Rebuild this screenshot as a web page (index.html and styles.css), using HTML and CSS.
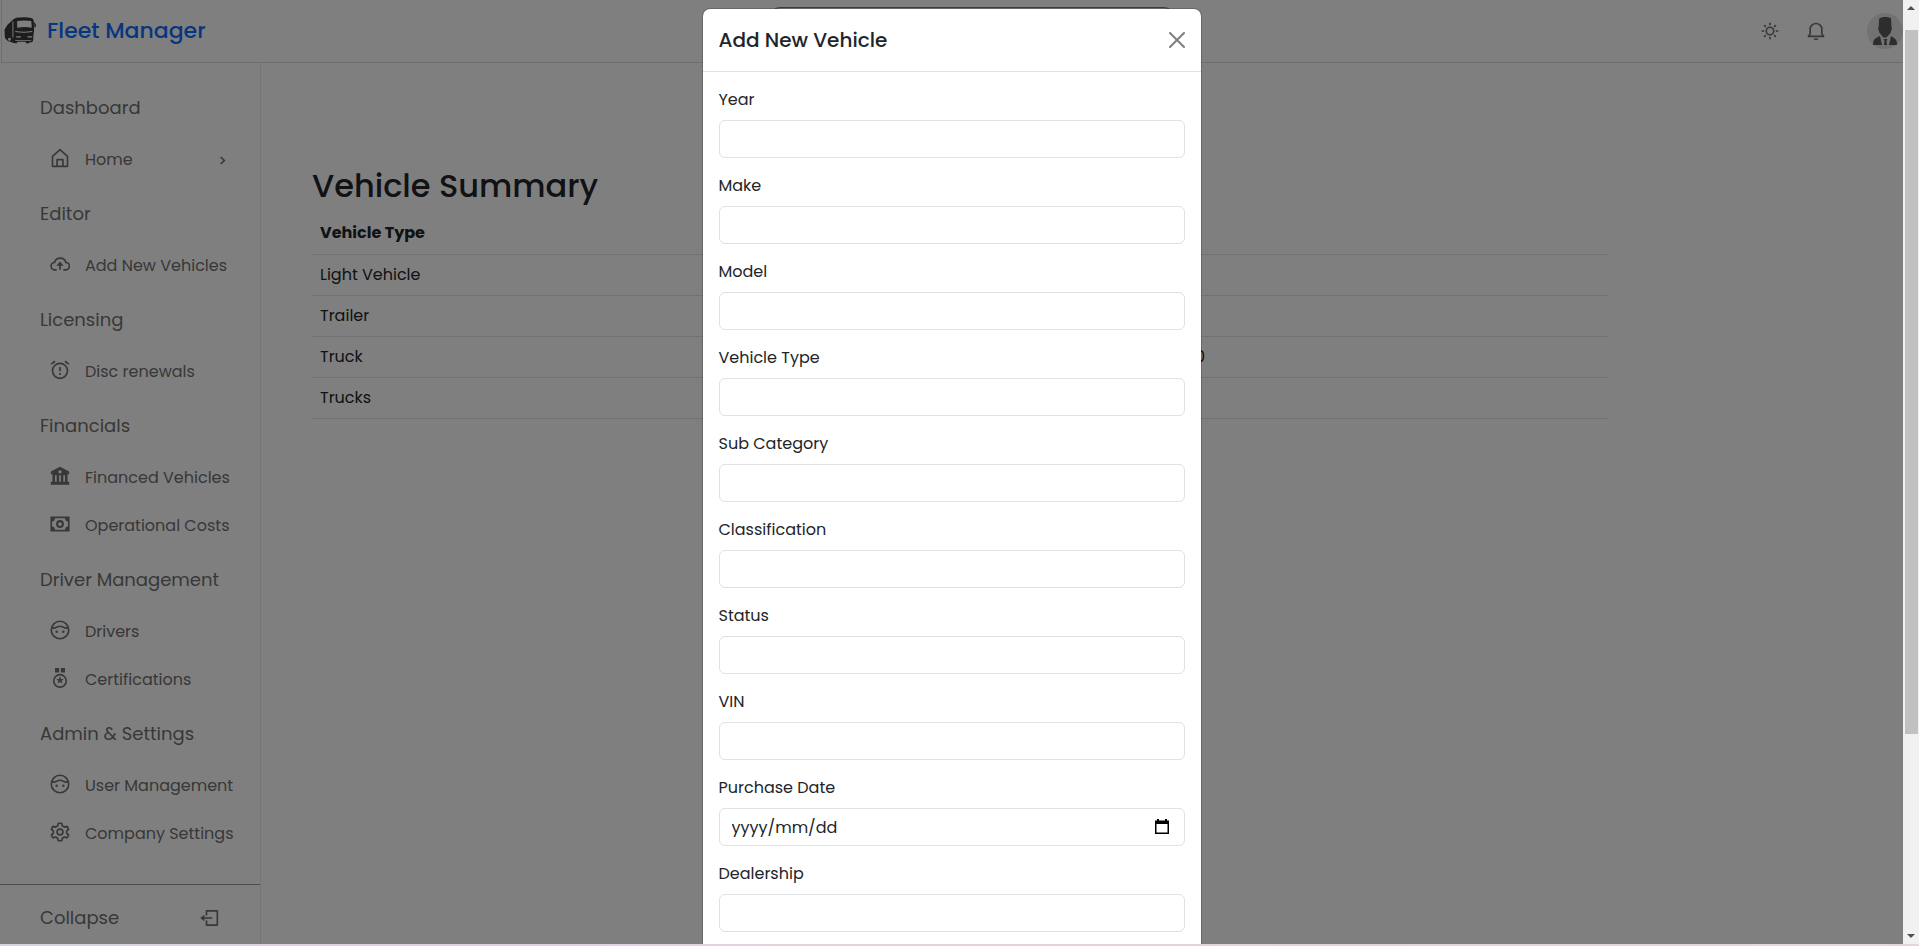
FILE: index.html
```html
<!DOCTYPE html>
<html lang="en">
<head>
<meta charset="utf-8">
<title>Fleet Manager</title>
<link rel="stylesheet" href="styles.css">
</head>
<body>
<div class="viewport">
  <div class="app">
    <header class="topbar">
      <a class="brand" href="#">
        <svg class="logo" viewBox="0 0 34 30" aria-hidden="true">
          <path fill="#3a3a3a" d="M10 2.500 13 1c6-1 12-1 17 .500l1.500 2 .5 11-.5 3-.5 7-1 2.500h-3V28h-4v-1.500h-9V28h-3l-3-1-4-1.500-3-3-.5-9L4 8z"/>
          <path fill="#fff" d="M14 4.500c5-1 10-1 15 0l.5 7c-5-1-10-1-15.500 0zM12 15c6 1 12 1 18 0v1c-6 1-12 1-18 0zM13 20.500h5V22h-5zM25 20.500h5V22h-5zM12 24.500h17v.800H12zM9 5h1v17H9zM5 22.500a1.500 1.500 0 1 1 0 2.500 1.500 1.500 0 0 1 0-2.500z"/>
          <path stroke="#3a3a3a" stroke-width="1.500" fill="none" d="m31 6 2 2v3"/>
        </svg>
        <span>Fleet Manager</span>
      </a>
      <input class="search" type="search" aria-label="Search">
      <div class="actions">
        <button type="button" class="icon-button" aria-label="Theme">
          <svg viewBox="0 0 24 24" class="icon"><circle cx="12" cy="12" r="4.500" fill="none" stroke="currentColor" stroke-width="2"/><path fill="none" stroke="currentColor" stroke-width="2" d="M12 2v3M12 19v3M2 12h3M19 12h3M5 5l2 2M17 17l2 2M5 19l2-2M17 7l2-2"/></svg>
        </button>
        <button type="button" class="icon-button" aria-label="Notifications">
          <svg viewBox="0 0 24 24" class="icon"><path fill="none" stroke="currentColor" stroke-width="2" stroke-linejoin="round" d="M5 15.500V10a7 7 0 0 1 14 0v5.500l2 2.500v.500H3V18z"/><path fill="currentColor" d="M9 21h6a3 2 0 0 1-6 0z"/></svg>
        </button>
        <button type="button" class="avatar" aria-label="Account">
          <svg viewBox="0 0 36 36"><circle cx="18" cy="18" r="18" fill="#e4e4e4"/><path fill="#5a5a5a" d="M12 6c3-3 9-2 12-1l.5 9 .5 1-1.500 5-4 4.500h-3L12.500 20 11 15l.8-1zM6 32c0-4 1-6 3-7l4-2 2 9zM30 32c0-4-1-6-3-7l-3-2-2 9zM16.500 26h4l-1 2 .5 4h-3l.5-4z"/></svg>
        </button>
      </div>
    </header>
    <div class="columns">
      <nav class="sidebar" aria-label="Main">
        <div class="groups">
          <section class="group"><h2>Dashboard</h2>
            <a href="#" class="item"><svg viewBox="0 0 24 24" class="icon"><path fill="none" stroke="currentColor" stroke-width="2" stroke-linejoin="round" d="M3 10 12 2l9 8v12H3zM8.500 22v-8h7v8"/></svg><span>Home</span>
              <svg class="chevron" viewBox="0 0 8 10"><path fill="none" stroke="currentColor" stroke-width="2" d="m2 1 4 4-4 4"/></svg></a>
          </section>
          <section class="group"><h2>Editor</h2>
            <a href="#" class="item"><svg viewBox="0 0 24 24" class="icon"><path fill="none" stroke="currentColor" stroke-width="2" d="M8 19H6a4.500 4.500 0 0 1-.5-9 7 7 0 0 1 13.500 0 4.500 4.500 0 0 1-.500 9H16"/><path fill="currentColor" d="m12 9 4.500 5H13v5h-2v-5H7.500z"/></svg><span>Add New Vehicles</span></a>
          </section>
          <section class="group"><h2>Licensing</h2>
            <a href="#" class="item"><svg viewBox="0 0 24 24" class="icon"><path fill="none" stroke="currentColor" stroke-width="2" d="M12 4a9 9 0 1 0 0 18 9 9 0 0 0 0-18zM1.500 5 6 1.500M22.500 5 18 1.500M12 8.500v5M12 15.500v2.500"/></svg><span>Disc renewals</span></a>
          </section>
          <section class="group"><h2>Financials</h2>
            <a href="#" class="item"><svg viewBox="0 0 24 24" class="icon"><path fill="currentColor" fill-rule="evenodd" d="M12 1 1 6.500V10h2v9H1v3.500h22V19h-2v-9h2V6.500zM12 5a2 2 0 1 1 0 4 2 2 0 0 1 0-4zM6 11h2v8H6zM11 11h2v8h-2zM16 11h2v8h-2z"/></svg><span>Financed Vehicles</span></a>
            <a href="#" class="item"><svg viewBox="0 0 24 24" class="icon"><path fill="currentColor" fill-rule="evenodd" d="M.5 3h23v18H.5zM6 5a4 4 0 0 1-3.500 4v6A4 4 0 0 1 6 19h12a4 4 0 0 1 3.500-4V9A4 4 0 0 1 18 5z"/><circle cx="12" cy="12" r="3.500" fill="none" stroke="currentColor" stroke-width="2.500"/></svg><span>Operational Costs</span></a>
          </section>
          <section class="group"><h2>Driver Management</h2>
            <a href="#" class="item"><svg viewBox="0 0 24 24" class="icon"><circle cx="12" cy="12" r="10.500" fill="none" stroke="currentColor" stroke-width="2"/><path fill="none" stroke="currentColor" stroke-width="2" d="M2.500 9.500c4 1 6-2 9.500-2s5.500 3 9.500 2"/><circle cx="8" cy="14" r="1.500" fill="currentColor"/><circle cx="16" cy="14" r="1.500" fill="currentColor"/></svg><span>Drivers</span></a>
            <a href="#" class="item"><svg viewBox="0 0 24 24" class="icon"><path fill="currentColor" d="M6 0h5v5.500H6zM13 0h5v5.500h-5zM12 10l1.300 3.200 3.200.2-2.500 2 .9 3.200-2.900-1.800-2.900 1.800.9-3.200-2.500-2 3.200-.2z"/><circle cx="12" cy="15.500" r="7.500" fill="none" stroke="currentColor" stroke-width="2"/></svg><span>Certifications</span></a>
          </section>
          <section class="group"><h2>Admin &amp; Settings</h2>
            <a href="#" class="item"><svg viewBox="0 0 24 24" class="icon"><circle cx="12" cy="12" r="10.500" fill="none" stroke="currentColor" stroke-width="2"/><path fill="none" stroke="currentColor" stroke-width="2" d="M2.500 9.500c4 1 6-2 9.500-2s5.500 3 9.500 2"/><circle cx="8" cy="14" r="1.500" fill="currentColor"/><circle cx="16" cy="14" r="1.500" fill="currentColor"/></svg><span>User Management</span></a>
            <a href="#" class="item"><svg viewBox="0 0 24 24" class="icon"><path fill="none" stroke="currentColor" stroke-width="2" stroke-linejoin="round" d="m10 1.500-.8 3.200-2.400 1.400-3.200-1-2 3.500L4 11v2.500l-2.400 2 2 3.500 3.200-1 2.400 1.400.8 3.100h4l.8-3.100 2.400-1.400 3.200 1 2-3.500-2.400-2V11l2.400-2.400-2-3.500-3.200 1-2.400-1.400-.8-3.200z"/><circle cx="12" cy="12" r="3.500" fill="none" stroke="currentColor" stroke-width="2"/></svg><span>Company Settings</span></a>
          </section>
        </div>
        <button type="button" class="collapse"><span>Collapse</span>
          <svg viewBox="0 0 24 24" class="icon"><path fill="none" stroke="currentColor" stroke-width="2" stroke-linejoin="round" d="M9 9V3.500h13v17H9V15M4 12h12"/><path fill="currentColor" d="m1.500 12 5-4v8z"/></svg>
        </button>
      </nav>
      <main class="content">
        <h1>Vehicle Summary</h1>
        <table class="summary">
          <thead><tr><th scope="col">Vehicle Type</th><td></td><td class="value"></td></tr></thead>
          <tbody>
            <tr><td>Light Vehicle</td><td></td><td></td></tr>
            <tr><td>Trailer</td><td></td><td></td></tr>
            <tr><td>Truck</td><td></td><td>0</td></tr>
            <tr><td>Trucks</td><td></td><td></td></tr>
          </tbody>
        </table>
      </main>
    </div>
    <div class="overlay">
      <div class="modal" role="dialog" aria-modal="true" aria-labelledby="modal-title">
        <div class="modal-header">
          <h2 id="modal-title">Add New Vehicle</h2>
          <button type="button" class="close" aria-label="Close"><svg viewBox="0 0 16 16"><path fill="none" stroke="currentColor" stroke-width="2" stroke-linecap="round" d="m1 1 14 14M15 1 1 15"/></svg></button>
        </div>
        <form class="modal-body">
          <div class="field"><label for="year">Year</label><input id="year" type="text"></div>
          <div class="field"><label for="make">Make</label><input id="make" type="text"></div>
          <div class="field"><label for="model">Model</label><input id="model" type="text"></div>
          <div class="field"><label for="type">Vehicle Type</label><input id="type" type="text"></div>
          <div class="field"><label for="sub">Sub Category</label><input id="sub" type="text"></div>
          <div class="field"><label for="class">Classification</label><input id="class" type="text"></div>
          <div class="field"><label for="status">Status</label><input id="status" type="text"></div>
          <div class="field"><label for="vin">VIN</label><input id="vin" type="text"></div>
          <div class="field"><label for="date">Purchase Date</label>
            <div class="date"><input id="date" type="text" placeholder="yyyy/mm/dd">
              <button type="button" aria-label="Choose date"><svg viewBox="0 0 14 15"><path fill="#000" fill-rule="evenodd" d="M2 0h2v1.500h6V0h2v1.500h2V15H0V1.500h2zM1.500 5v8.500h11V5z"/></svg></button></div></div>
          <div class="field"><label for="dealer">Dealership</label><input id="dealer" type="text"></div>
        </form>
      </div>
    </div>
  </div>
  <div class="scrollbar" aria-hidden="true">
    <svg viewBox="0 0 16 16"><path fill="#505050" d="m4 10 4-4 4 4z"/></svg>
    <div class="track"><div class="thumb"></div></div>
    <svg viewBox="0 0 16 16"><path fill="#505050" d="m4 6 4 4 4-4z"/></svg>
  </div>
</div>
</body>
</html>
```
FILE: styles.css
```css
* { box-sizing: border-box; }
body {
  margin: 0;
  height: 100vh;
  display: flex;
  flex-direction: column;
  overflow: hidden;
  font: 400 16px/24px Poppins, Inter, "Open Sans", sans-serif;
  color: #212529;
  background: linear-gradient(90deg, #d9d0e6, #e8d0dd 50%, #e6d5d8);
  padding-bottom: 2px;
}
h1, h2 { margin: 0; font-weight: 500; }
button, input { font: inherit; color: inherit; }
button { border: 0; padding: 0; background: none; }
a { color: inherit; text-decoration: none; }
svg { display: block; flex: none; }

.viewport { flex: 1; display: flex; min-height: 0; }
.app { flex: 1; position: relative; display: flex; flex-direction: column; overflow: hidden; background: #fff; }

.topbar {
  display: flex;
  align-items: center;
  justify-content: space-between;
  height: 63px;
  margin-left: 1px;
  border: solid #dcdcdc;
  border-width: 0 0 1px 1px;
}
.brand { flex: 1; display: flex; align-items: center; gap: 11px; padding-left: 2px; color: #0d6efd; font-size: 22px; font-weight: 500; }
.logo { width: 32px; height: 30px; }
.search { width: 404px; height: 48px; margin-left: 36px; border: 1px solid #777; border-radius: 10px; background: #fff; }
.actions { flex: 1; display: flex; justify-content: flex-end; align-items: center; gap: 26px; color: #707070; }
.icon { width: 20px; height: 20px; }
.avatar { width: 36px; height: 36px; margin-left: 15px; }

.columns { flex: 1; display: flex; min-height: 0; }
.sidebar { width: 261px; display: flex; flex-direction: column; border-right: 1px solid #eaeaea; color: #707070; }
.groups { flex: 1; padding-top: 31px; }
.group { margin-bottom: 16px; }
.group h2 { font-size: 18px; line-height: 28px; font-weight: 400; padding-left: 40px; margin-bottom: 14px; }
.item { display: flex; align-items: center; gap: 15px; height: 48px; padding: 0 34px 0 50px; white-space: nowrap; }
.item .icon { margin-bottom: 4px; }
.chevron { width: 7px; height: 9px; margin-left: auto; }
.collapse { display: flex; align-items: center; justify-content: space-between; height: 60px; padding: 6px 41px 0 40px; border-top: 1px solid #999; font-size: 18px; }

.content { flex: 1; padding: 104px 51px 0; }
h1 { font-size: 32px; line-height: 38px; margin-bottom: 8px; }
.summary { width: 100%; max-width: 1296px; border-collapse: collapse; table-layout: fixed; }
.summary th, .summary td { height: 41px; padding: 8px; text-align: left; border-bottom: 1px solid #dee2e6; }
.summary th { font-weight: 700; color: #212529; }
.summary .value { width: 421px; }

.overlay { position: absolute; inset: 0; padding-top: 8px; overflow: hidden; background: rgba(0, 0, 0, 0.5); }
.modal { width: 500px; max-width: 100%; margin: 0 auto; border: 1px solid rgba(0, 0, 0, 0.175); border-radius: 8px; background: #fff; background-clip: padding-box; }
.modal-header { display: flex; align-items: center; justify-content: space-between; padding: 16px; border-bottom: 1px solid #dee2e6; }
.modal-header h2 { font-size: 20px; line-height: 30px; }
.close { color: #7f7f7f; }
.close svg { width: 16px; height: 16px; }
.modal-body { padding: 16px; }
.field { display: flex; flex-direction: column; gap: 8px; margin-bottom: 16px; }
.field input { width: 100%; height: 38px; padding: 6px 12px; border: 1px solid #dee2e6; border-radius: 6px; background: #fff; }
.field input::placeholder { color: #212529; opacity: 1; }
.date { position: relative; }
.date button { position: absolute; right: 16px; top: 11px; }
.date svg { width: 14px; height: 15px; }

.scrollbar { width: 16px; display: flex; flex-direction: column; background: #f1f1f1; }
.scrollbar svg { width: 16px; height: 16px; }
.track { flex: 1; padding: 14px 1px 0 2px; }
.thumb { height: 78.4%; background: #c1c1c1; }
```
